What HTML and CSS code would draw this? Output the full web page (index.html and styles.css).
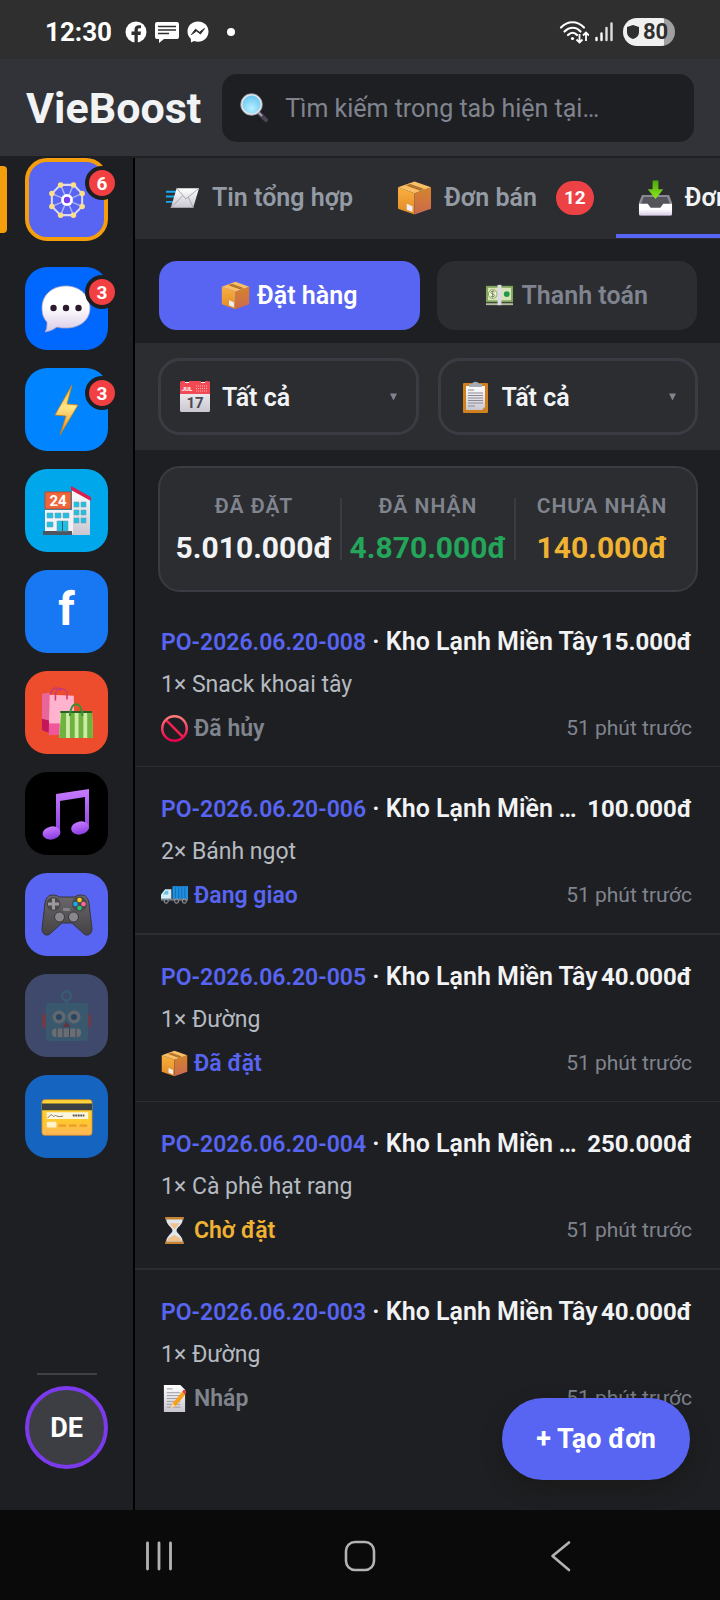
FILE: index.html
```html
<!DOCTYPE html>
<html lang="vi">
<head>
<meta charset="utf-8">
<meta name="viewport" content="width=device-width, initial-scale=1">
<title>VieBoost</title>
<link rel="stylesheet" href="styles.css">
</head>
<body>
<svg class="sprite" width="0" height="0" aria-hidden="true">
  <defs>
    <linearGradient id="g-white" x1="0" y1="0" x2="0" y2="1"><stop offset=".45" stop-color="#fff"/><stop offset="1" stop-color="#d8c9e6"/></linearGradient>
    <linearGradient id="g-paper" x1="0" y1="0" x2="0" y2="1"><stop offset="0" stop-color="#fff"/><stop offset="1" stop-color="#c9c6d0"/></linearGradient>
    <linearGradient id="g-bolt" x1="0" y1="0" x2="0" y2="1"><stop offset="0" stop-color="#f2b632"/><stop offset=".45" stop-color="#ffe58a"/><stop offset="1" stop-color="#e8830c"/></linearGradient>
    <linearGradient id="g-box" x1="0" y1="0" x2="0" y2="1"><stop offset="0" stop-color="#fbb040"/><stop offset="1" stop-color="#e08a25"/></linearGradient>
    <linearGradient id="g-box2" x1="0" y1="0" x2="0" y2="1"><stop offset="0" stop-color="#d9822a"/><stop offset="1" stop-color="#c96a50"/></linearGradient>
    <linearGradient id="g-pink" x1="0" y1="0" x2="0" y2="1"><stop offset=".7" stop-color="#ffb3cf"/><stop offset=".72" stop-color="#f0569a"/></linearGradient>
    <linearGradient id="g-note" x1="0" y1="0" x2="0" y2="1"><stop offset="0" stop-color="#c77bff"/><stop offset="1" stop-color="#8a3ce0"/></linearGradient>
    <linearGradient id="g-pad" x1="0" y1="0" x2="0" y2="1"><stop offset="0" stop-color="#6b686c"/><stop offset="1" stop-color="#454246"/></linearGradient>
    <linearGradient id="g-card" x1="0" y1="0" x2="0" y2="1"><stop offset="0" stop-color="#ffd43a"/><stop offset=".6" stop-color="#ffc82e"/><stop offset="1" stop-color="#ffb65c"/></linearGradient>
    <linearGradient id="g-arrow" x1="0" y1="0" x2="0" y2="1"><stop offset="0" stop-color="#4ea80c"/><stop offset="1" stop-color="#8be61e"/></linearGradient>
    <linearGradient id="g-ban" x1="0" y1="0" x2="0" y2="1"><stop offset="0" stop-color="#ff7b7b"/><stop offset="1" stop-color="#e8004c"/></linearGradient>
    <radialGradient id="g-lens" cx=".5" cy=".7" r=".6"><stop offset="0" stop-color="#b8f0ff"/><stop offset="1" stop-color="#6cc9f2"/></radialGradient>
  </defs>

  <symbol id="i-search" viewBox="0 0 28 30">
    <path d="M18 19l8 8" stroke="#4a4352" stroke-width="4" stroke-linecap="round"/>
    <path d="M18 19l4 4" stroke="#a89fb0" stroke-width="2"/>
    <circle cx="11.500" cy="11.500" r="10" fill="url(#g-lens)" stroke="#e4e6ea" stroke-width="2"/>
    <circle cx="11.500" cy="11.500" r="10.900" fill="none" stroke="#667" stroke-width=".6"/>
  </symbol>

  <symbol id="i-wheel" viewBox="0 0 48 48">
    <g stroke="#fff" stroke-opacity=".5" stroke-width="1.500"><path d="M17 7.500l14 33M31 7.500l-14 33M7.500 17l33 14M7.500 31l33-14"/></g>
    <path d="M17 7.500h14L40.500 17v14L31 40.500H17L7.500 31V17z" fill="none" stroke="#d9dafc" stroke-width="2.200"/>
    <g fill="#fde085"><circle cx="17" cy="7.500" r="3"/><circle cx="31" cy="7.500" r="3"/><circle cx="40.500" cy="17" r="3"/><circle cx="40.500" cy="31" r="3"/><circle cx="31" cy="40.500" r="3"/><circle cx="17" cy="40.500" r="3"/><circle cx="7.500" cy="31" r="3"/><circle cx="7.500" cy="17" r="3"/></g>
    <circle cx="24" cy="24" r="6.500" fill="#fff"/><circle cx="24" cy="24" r="3.500" fill="#7c3aed"/>
  </symbol>

  <symbol id="i-chat" viewBox="0 0 52 52">
    <path d="M25 3C11 3 1 12 1 25c0 7 2 11 5 14 0 4 0 7-2 10 6-1 9-3 12-5 3 1 6 1 9 1 14 0 24-8 24-20S39 3 25 3z" fill="url(#g-white)" stroke="#a9a2c4" stroke-width=".8"/>
    <g fill="#2a1a2c"><circle cx="12.500" cy="25" r="3.200"/><circle cx="25" cy="25" r="3.200"/><circle cx="37.500" cy="25" r="3.200"/></g>
  </symbol>
  <symbol id="i-bolt" viewBox="0 0 52 52">
    <path d="M31 1L14 31l11 1-6 19 18-30-11-1z" fill="url(#g-bolt)" stroke="#c98212" stroke-width=".8" stroke-linejoin="round"/>
  </symbol>
  <symbol id="i-bags" viewBox="0 0 54 54">
    <path d="M1 7l8-1v42l-8-3z" fill="#e8669a"/><path d="M1 33l8 2v13l-8-3z" fill="#c2185b"/>
    <path d="M9 8l25 1 1 40-27 1z" fill="url(#g-pink)"/>
    <path d="M15 14V8c0-8 11-8 12-1v6M10 8c1-9 9-8 11-4" fill="none" stroke="#c93a72" stroke-width="1.600"/>
    <path d="M20 25h33l1 28H19z" fill="#cdeaa6"/>
    <path d="M21 25h5v28h-7zM30 25h5v28h-5zM39 25h5v28h-5zM48 25h5l1 28h-6z" fill="#6db33d"/>
    <path d="M20 25h33v2H20z" fill="#2c6124"/><path d="M30 30c0-16 13-16 13 0" fill="none" stroke="#3a8f35" stroke-width="2"/>
  </symbol>
  <symbol id="i-music" viewBox="0 0 52 52">
    <path d="M15 6L48 1v40h-4V9L19 13v34h-4z" fill="url(#g-note)"/>
    <ellipse cx="10.500" cy="45" rx="9" ry="6.500" fill="url(#g-note)" transform="rotate(-12 10.500 45)"/><ellipse cx="39" cy="40" rx="9" ry="6.500" fill="url(#g-note)" transform="rotate(-12 39 40)"/>
  </symbol>
  <symbol id="i-gamepad" viewBox="0 0 52 52">
    <path d="M12 6c3 0 5 1 6 2h16c1-1 3-2 6-2 5 0 7 3 8 8l3 26c0 6-6 8-9 4L31 34H21L10 44c-3 4-9 2-9-4l3-26c1-5 3-8 8-8z" fill="url(#g-pad)" stroke="#37343a"/>
    <circle cx="12.500" cy="15" r="7" fill="#4b484c"/><path d="M11 9.500h3v4h4v3h-4v4h-3v-4H7v-3h4z" fill="#9c999e"/>
    <circle cx="38.500" cy="15" r="7.500" fill="#4b484c"/><circle cx="38.500" cy="11" r="2.300" fill="#ffcc16"/><circle cx="34.500" cy="15" r="2.300" fill="#18a9f0"/><circle cx="42.500" cy="15" r="2.300" fill="#ff6b92"/><circle cx="38.500" cy="19" r="2.300" fill="#1fc46c"/>
    <rect x="22" y="19" width="7" height="3" rx="1" fill="#858287"/>
    <circle cx="18.500" cy="28" r="5" fill="#8a878c" stroke="#3b383d"/><circle cx="32.500" cy="28" r="5" fill="#8a878c" stroke="#3b383d"/>
  </symbol>
  <symbol id="i-robot" viewBox="0 0 52 52">
    <circle cx="25.500" cy="6" r="4.500" fill="none" stroke="#63b6e6" stroke-width="2.500"/><path d="M25.500 10v5" stroke="#63b6e6" stroke-width="3"/>
    <path d="M1 26c0-2 2-2 4-2v14c-3 0-4-1-4-3zM50 26c0-2-2-2-4-2v14c3 0 4-1 4-3z" fill="#e8667f"/>
    <rect x="5" y="13" width="42" height="38" rx="3" fill="#62aede"/>
    <circle cx="18" cy="27" r="6.500" fill="#c6d2e0"/><circle cx="33" cy="27" r="6.500" fill="#c6d2e0"/><circle cx="18" cy="27" r="3" fill="#3b7fc5"/><circle cx="33" cy="27" r="3" fill="#3b7fc5"/>
    <path d="M25.500 32l4 5h-8z" fill="#d84a5f"/><rect x="11" y="38.500" width="29" height="8.500" rx="4" fill="#dde3ec"/><path d="M16 38v9M22 38v9M28.500 38v9M35 38v9" stroke="#5d7f9d" stroke-width="1"/>
  </symbol>
  <symbol id="i-card" viewBox="0 0 54 54">
    <rect x="1" y="9" width="52" height="37" rx="3" fill="url(#g-card)" stroke="#d98a18" stroke-width=".8"/>
    <path d="M1 13h52v7H1z" fill="#3a3f42"/><path d="M6 22h43v7H6z" fill="#fdf6df"/><path d="M7 28c5-7 5 0 7-2s2 2 9 0" fill="none" stroke="#555" stroke-width=".8"/><path d="M33 25.500h12" stroke="#555" stroke-width="2" stroke-dasharray="2 .6"/>
    <rect x="6" y="32" width="10" height="6" rx="1.500" fill="#fff3d0"/><path d="M18 36h31" stroke="#eda32a" stroke-width="3" stroke-dasharray="8 3"/>
  </symbol>

  <symbol id="i-mail" viewBox="0 0 36 36">
    <path d="M1 11.500h11M1 16.500h9M1 22h7" stroke="#18a9ee" stroke-width="2"/>
    <path d="M12 8h23l-6 20H6z" fill="url(#g-paper)"/><path d="M12 8l9.500 11L35 8M6 28l12-12M29 28l-5-11" fill="none" stroke="#a7a5ad" stroke-width="1"/>
  </symbol>
  <symbol id="i-box" viewBox="0 0 36 36">
    <path d="M1 7l17 6v22L1 29z" fill="url(#g-box)"/><path d="M18 13l17-6v22l-17 6z" fill="url(#g-box2)"/>
    <path d="M1 7l17-6 17 6-17 6z" fill="#f8bf66"/><path d="M8 5l17 6 4-1.500L12 3.400z" fill="#e0953c"/><path d="M11 5l14 5M13 4l14 5" stroke="#7d511f" stroke-width=".8"/>
    <path d="M25 11l4-1.500V15l-4 1z" fill="#c98333"/><path d="M10 24l6 2.500v6L10 30z" fill="#f0eef4"/>
  </symbol>
  <symbol id="i-inbox" viewBox="0 0 36 36">
    <path d="M4 15h28l3 8v13H1V23z" fill="#8a8892"/><path d="M6 17h24l3 8h-7l-3 4H13l-3-4H3z" fill="#56545b"/>
    <path d="M1 24h9l3 4h10l3-4h9v10q0 2-2 2H3q-2 0-2-2z" fill="url(#g-white)"/>
    <path d="M15 0h6v9h5l-8 10-8-10h5z" fill="url(#g-arrow)"/>
  </symbol>
  <symbol id="i-cash" viewBox="0 0 30 30">
    <rect x="1" y="5" width="28" height="17" fill="#7ea35a"/><rect x="3" y="7" width="24" height="13" fill="#d8e3b8"/><circle cx="8" cy="13.500" r="4.500" fill="#f3f0da" stroke="#7ea35a"/>
    <path d="M10 11.500c-1-1.500-4-1-4 .500s4 1.500 4 3-3 2-4 .500M8 10v7" fill="none" stroke="#6f8a50" stroke-width="1"/>
    <circle cx="22.500" cy="13.500" r="3" fill="#1b9a4c"/><path d="M1 23h28v2H1z" fill="#b9bda0"/><path d="M13 4h4v21h-4z" fill="#dcdae6"/>
  </symbol>
  <symbol id="i-clipboard" viewBox="0 0 30 32">
    <rect x="3" y="2" width="25" height="30" rx="1" fill="#d0801f"/><path d="M6 5h19v21l-3 3H6z" fill="url(#g-paper)"/>
    <path d="M8 9h6M8 12h15M8 14.500h15M8 17h15M8 19.500h15M8 22h15M8 25h7" stroke="#8b8998" stroke-width="1"/>
    <path d="M9 6V3h3c1-3 6-3 7 0h3v3z" fill="#a5abb5"/>
  </symbol>
  <symbol id="i-ban" viewBox="0 0 26 26"><path d="M4.500 4.500l17 17" stroke="#f0204f" stroke-width="2.500"/><circle cx="13" cy="13" r="11.800" fill="none" stroke="url(#g-ban)" stroke-width="2.400"/></symbol>
  <symbol id="i-truck" viewBox="0 0 26 26">
    <path d="M11 4h15v13H11z" fill="#1f8fe0"/><path d="M14 5v11M17 5v11M20 5v11M23 5v11" stroke="#1565ad" stroke-width=".8"/><path d="M4 7h6v10H0v-5z" fill="#d3edf6"/><path d="M4.500 8.500H7V12H2z" fill="#6bbfe3"/><path d="M0 16h26v2H0z" fill="#737a84"/>
    <g fill="#33363c" stroke="#a9adb4" stroke-width=".8"><circle cx="5" cy="18.500" r="2"/><circle cx="15" cy="18.500" r="2"/><circle cx="22.500" cy="18.500" r="2"/></g>
  </symbol>
  <symbol id="i-hourglass" viewBox="0 0 26 26">
    <path d="M5 2h16c0 6-6 8-6 11s6 5 6 11H5c0-6 6-8 6-11S5 8 5 2z" fill="#dfe6ee"/><path d="M8 6h10l-5 6zM6 23c1-4 5-4 7-6 2 2 6 2 7 6z" fill="#efc18c"/><path d="M4 0h18v2.500H4zM4 23.500h18V26H4z" fill="#c68335"/>
  </symbol>
  <symbol id="i-memo" viewBox="0 0 26 28">
    <path d="M2 0h17l5 5v23H2z" fill="url(#g-paper)"/><path d="M5 4h6M5 8h14M5 11h14M5 14h14M5 17h14M5 20h14M5 23h14" stroke="#9d9ba6" stroke-width="1"/>
    <path d="M9 24l2-5L21 7l3 3-10 12z" fill="#f9a01b"/><path d="M21 7l1.500-2q3 0 2.500 3L24 10z" fill="#d8433b"/><path d="M9 24l2-5 3 3z" fill="#f6d9b0"/>
  </symbol>
</svg>

<div class="status-bar">
  <span class="clock">12:30</span>
  <svg class="status-icon" viewBox="0 0 22 22"><circle cx="11" cy="11" r="10.500" fill="#fff"/><path d="M9.500 22v-8H6.500v-3.500h3V8.500c0-3 2-4.200 4.300-4.200H16v3h-1.500c-1.200 0-1.700.6-1.700 1.700v1.500H16l-.5 3.500h-2.700v8z" fill="#2f2f2f"/></svg>
  <svg class="status-icon status-icon-wide" viewBox="0 0 24 22"><path d="M2 1h20q2 0 2 2v13q0 2-2 2H9l-5 4v-4H2q-2 0-2-2V3q0-2 2-2z" fill="#fff"/><path d="M3 5.500h18M3 9h18M3 12.500h11" stroke="#2f2f2f" stroke-width="1.600"/></svg>
  <svg class="status-icon" viewBox="0 0 22 22"><path d="M11 .5C5 .5.500 4.700.500 10.500c0 3 1.200 5.500 3.300 7.300L4 21.500l3-1.400c1.200.4 2.600.6 4 .6 6 0 10.500-4.400 10.500-10.200S17 .5 11 .5z" fill="#fff"/><path d="M4.500 13.500l4-5.300 4 3 5-3.700-4 5.500-4-3z" fill="#2f2f2f" stroke="#2f2f2f" stroke-linejoin="round"/></svg>
  <span class="status-dot"></span>
  <div class="status-right">
    <svg class="wifi" viewBox="0 0 30 24"><g fill="none" stroke="#fff" stroke-width="2.200" stroke-linecap="round"><path d="M2 7.500C8.500 .5 18.500 .5 25 7.500M5.500 11.500c5-5 11.500-5 16 0M9 15c3-3 6.500-3 9 0"/></g><circle cx="13.500" cy="18.500" r="1.600" fill="#fff"/><g fill="none" stroke="#fff" stroke-width="1.800"><path d="M20.500 14v8M17.500 19.500l3 3 3-3M27 21v-8M24 15.500l3-3 3 3"/></g></svg>
    <svg class="signal" viewBox="0 0 18 20"><g stroke-width="2.400" stroke-linecap="round"><path d="M1.500 16v2M6.500 11.500V18" stroke="#fff"/><path d="M11.500 6v12M16.500 1.500V18" stroke="#dedede"/></g></svg>
    <span class="battery"><svg class="shield" viewBox="0 0 14 16"><path d="M7 1l6 2v5c0 3.500-2.500 6-6 7-3.500-1-6-3.500-6-7V3z" fill="#2f2f2f"/></svg>80</span>
  </div>
</div>

<header class="header">
  <h1 class="brand">VieBoost</h1>
  <label class="search">
    <svg class="search-icon"><use href="#i-search"/></svg>
    <input class="search-input" type="text" placeholder="Tìm kiếm trong tab hiện tại…" aria-label="Tìm kiếm">
  </label>
</header>

<div class="shell">
  <nav class="sidebar" aria-label="Kênh">
    <button class="app app-wheel" aria-label="Tổng hợp"><svg class="wheel-icon"><use href="#i-wheel"/></svg><span class="count">6</span></button>
    <button class="app app-zalo" aria-label="Chat"><svg class="app-icon"><use href="#i-chat"/></svg><span class="count">3</span></button>
    <button class="app app-messenger" aria-label="Messenger"><svg class="app-icon"><use href="#i-bolt"/></svg><span class="count">3</span></button>
    <button class="app app-store" aria-label="Cửa hàng">
      <svg class="app-icon" viewBox="0 0 52 52">
        <path d="M31 3l18 12v35H31z" fill="url(#g-paper)"/><path d="M4 25h28v23H4z" fill="#f4f2f6"/>
        <path d="M30 1l20 11v4L30 5z" fill="#dc1f4e"/>
        <rect x="4" y="7" width="26" height="17" fill="#f0663c" stroke="#b74020" stroke-width=".8"/>
        <text x="17" y="21" class="glyph-sign" text-anchor="middle">24</text>
        <path d="M2 46h29v4H2z" fill="#4d5562"/>
        <g fill="#21bfe2" stroke="#6ba6b5" stroke-width=".6"><path d="M6 28h6v5H6zM14 28h6v5h-6zM22 28h6v5h-6zM6 37h6v5H6zM16 36h11v10H16zM33 17h5v5h-5zM40 17h5v5h-5zM33 25h5v5h-5zM40 25h5v5h-5zM33 33h5v5h-5zM40 33h5v5h-5z"/></g>
        <path d="M21.500 36v10" stroke="#28606f" stroke-width="1"/>
      </svg>
    </button>
    <button class="app app-facebook">f</button>
    <button class="app app-shopee" aria-label="Mua sắm"><svg class="app-icon"><use href="#i-bags"/></svg></button>
    <button class="app app-tiktok" aria-label="Âm nhạc"><svg class="app-icon"><use href="#i-music"/></svg></button>
    <button class="app app-discord" aria-label="Trò chơi"><svg class="app-icon"><use href="#i-gamepad"/></svg></button>
    <button class="app app-bot" aria-label="Robot"><svg class="app-icon"><use href="#i-robot"/></svg></button>
    <button class="app app-card" aria-label="Thẻ"><svg class="app-icon"><use href="#i-card"/></svg></button>
    <hr class="sidebar-rule">
    <button class="avatar">DE</button>
  </nav>

  <main class="content">
    <div class="tabs">
      <button class="tab"><svg class="tab-icon"><use href="#i-mail"/></svg>Tin tổng hợp</button>
      <button class="tab"><svg class="tab-icon"><use href="#i-box"/></svg>Đơn bán<span class="tab-count">12</span></button>
      <button class="tab tab-active"><svg class="tab-icon"><use href="#i-inbox"/></svg>Đơn</button>
    </div>

    <div class="segments">
      <button class="segment segment-active"><svg class="segment-icon"><use href="#i-box"/></svg>Đặt hàng</button>
      <button class="segment"><svg class="segment-icon"><use href="#i-cash"/></svg>Thanh toán</button>
    </div>

    <div class="filters">
      <label class="filter">
        <svg class="filter-icon" viewBox="0 0 30 32">
          <rect x="0" y="1" width="30" height="30" rx="1.500" fill="url(#g-paper)"/><path d="M0 2q0-2 2-2h3v2h4V0h12v2h4V0h3q2 0 2 2v11H0z" fill="#f24a55"/>
          <text x="7" y="10" class="glyph-month" text-anchor="middle">JUL</text><path d="M16 5h12M16 7.500h12M16 10h12" stroke="#ffb2b2" stroke-width="1" stroke-dasharray="1 1"/>
          <text x="15" y="27" class="glyph-day" text-anchor="middle">17</text>
        </svg>
        <select class="filter-select" aria-label="Thời gian"><option>Tất cả</option></select><svg class="caret" viewBox="0 0 8 8"><path d="M0 0h8L4 8z" fill="#80848e"/></svg>
      </label>
      <label class="filter"><svg class="filter-icon"><use href="#i-clipboard"/></svg><select class="filter-select" aria-label="Trạng thái"><option>Tất cả</option></select><svg class="caret" viewBox="0 0 8 8"><path d="M0 0h8L4 8z" fill="#80848e"/></svg></label>
    </div>

    <section class="summary">
      <div class="stat"><span class="stat-label">ĐÃ ĐẶT</span><span class="stat-value">5.010.000đ</span></div>
      <div class="stat"><span class="stat-label">ĐÃ NHẬN</span><span class="stat-value green">4.870.000đ</span></div>
      <div class="stat"><span class="stat-label">CHƯA NHẬN</span><span class="stat-value amber">140.000đ</span></div>
    </section>

    <ul class="orders">
      <li class="order">
        <div class="order-head"><div class="order-title"><span class="order-id">PO-2026.06.20-008</span> · Kho Lạnh Miền Tây</div><span class="order-price">15.000đ</span></div>
        <div class="order-items">1× Snack khoai tây</div>
        <div class="order-foot"><span class="order-status muted"><svg class="status-emoji"><use href="#i-ban"/></svg>Đã hủy</span><time class="order-time">51 phút trước</time></div>
      </li>
      <li class="order">
        <div class="order-head"><div class="order-title"><span class="order-id">PO-2026.06.20-006</span> · Kho Lạnh Miền Tây</div><span class="order-price">100.000đ</span></div>
        <div class="order-items">2× Bánh ngọt</div>
        <div class="order-foot"><span class="order-status blue"><svg class="status-emoji"><use href="#i-truck"/></svg>Đang giao</span><time class="order-time">51 phút trước</time></div>
      </li>
      <li class="order">
        <div class="order-head"><div class="order-title"><span class="order-id">PO-2026.06.20-005</span> · Kho Lạnh Miền Tây</div><span class="order-price">40.000đ</span></div>
        <div class="order-items">1× Đường</div>
        <div class="order-foot"><span class="order-status blue"><svg class="status-emoji"><use href="#i-box"/></svg>Đã đặt</span><time class="order-time">51 phút trước</time></div>
      </li>
      <li class="order">
        <div class="order-head"><div class="order-title"><span class="order-id">PO-2026.06.20-004</span> · Kho Lạnh Miền Tây</div><span class="order-price">250.000đ</span></div>
        <div class="order-items">1× Cà phê hạt rang</div>
        <div class="order-foot"><span class="order-status amber"><svg class="status-emoji"><use href="#i-hourglass"/></svg>Chờ đặt</span><time class="order-time">51 phút trước</time></div>
      </li>
      <li class="order">
        <div class="order-head"><div class="order-title"><span class="order-id">PO-2026.06.20-003</span> · Kho Lạnh Miền Tây</div><span class="order-price">40.000đ</span></div>
        <div class="order-items">1× Đường</div>
        <div class="order-foot"><span class="order-status muted"><svg class="status-emoji"><use href="#i-memo"/></svg>Nháp</span><time class="order-time">51 phút trước</time></div>
      </li>
    </ul>
    <button class="create">+ Tạo đơn</button>
  </main>
</div>

<nav class="system-nav" aria-label="Hệ thống">
  <button class="system-button" aria-label="Gần đây"><svg class="system-icon" viewBox="0 0 32 32"><path d="M4.500 3v26M16 3v26M27.500 3v26" stroke="#b3b3b3" stroke-width="2.800" stroke-linecap="round"/></svg></button>
  <button class="system-button" aria-label="Trang chủ"><svg class="system-icon" viewBox="0 0 32 32"><rect x="2" y="2" width="28" height="28" rx="9" fill="none" stroke="#b3b3b3" stroke-width="2.600"/></svg></button>
  <button class="system-button" aria-label="Quay lại"><svg class="system-icon" viewBox="0 0 32 32"><path d="M24 2.500L7.500 16 24 30" fill="none" stroke="#b3b3b3" stroke-width="2.600" stroke-linecap="round" stroke-linejoin="round"/></svg></button>
</nav>
</body>
</html>
```
FILE: styles.css
```css
* { box-sizing: border-box; }

body {
  margin: 0;
  min-height: 100vh;
  display: flex;
  flex-direction: column;
  overflow-x: hidden;
  background: #1e1f22;
  color: #f2f3f5;
  font-family: Roboto, "Noto Sans", sans-serif;
}

button, input, select { font: inherit; color: inherit; border: 0; margin: 0; padding: 0; background: none; }
svg { flex: none; display: block; }
.sprite { position: absolute; }

.glyph-sign { font-size: 15px; font-weight: 700; fill: #fff; }
.glyph-month { font-size: 6px; font-weight: 700; fill: #fff; }
.glyph-day { font-size: 15px; font-weight: 700; fill: #4a4a50; }

/* Status bar */
.status-bar {
  height: 59px;
  padding: 4px 45px 0;
  display: flex;
  align-items: center;
  gap: 8px;
  background: #2f2f2f;
  color: #fff;
}
.clock { margin-right: 5px; font-size: 26px; font-weight: 700; }
.status-icon { width: 22px; height: 22px; }
.status-icon-wide { width: 24px; }
.status-dot { width: 8px; height: 8px; margin-left: 10px; border-radius: 50%; background: #fff; }
.status-right { margin-left: auto; display: flex; align-items: center; gap: 6px; }
.wifi { width: 30px; height: 24px; }
.signal { width: 18px; height: 20px; }
.battery {
  width: 52px;
  height: 28px;
  margin-left: 4px;
  padding-left: 3px;
  display: flex;
  align-items: center;
  gap: 3px;
  border-radius: 14px;
  background: linear-gradient(90deg, #f0f0f0 79%, #a0a0a0 79%);
  color: #2f2f2f;
  font-size: 22px;
  font-weight: 700;
}
.shield { width: 14px; height: 16px; }

/* Header */
.header {
  padding: 15px 26px 14px;
  display: flex;
  align-items: center;
  gap: 21px;
  background: #313338;
  border-bottom: 2px solid #1e1f22;
}
.brand { margin: 0; font-size: 43px; line-height: 48px; font-weight: 700; }
.search {
  flex: 1;
  min-width: 0;
  height: 68px;
  padding: 0 18px;
  display: flex;
  align-items: center;
  gap: 17px;
  border-radius: 15px;
  background: #1e1f22;
}
.search-icon { width: 28px; height: 30px; }
.search-input { flex: 1; min-width: 0; font-size: 25px; outline: 0; }
.search-input::placeholder { color: #80848e; opacity: 1; }

.shell { flex: 1; display: flex; }

/* Sidebar */
.sidebar {
  width: 135px;
  flex: none;
  padding: 0 25px 41px;
  display: flex;
  flex-direction: column;
  gap: 18px;
  border-right: 2px solid #000;
}
.app {
  position: relative;
  width: 83px;
  height: 83px;
  display: flex;
  align-items: center;
  justify-content: center;
  border-radius: 22px;
}
.app-icon { width: 52px; height: 52px; }
.wheel-icon { width: 44px; height: 44px; }
.app-wheel { margin-bottom: 8px; background: #5865f2; border: 4px solid #f59e0b; }
.app-wheel::before {
  content: "";
  position: absolute;
  left: -29px;
  top: 4px;
  width: 7px;
  height: 67px;
  border-radius: 0 4px 4px 0;
  background: #f59e0b;
}
.app-zalo { background: #0068ff; }
.app-messenger { background: #0084ff; }
.app-store { background: #00a8eb; }
.app-facebook { background: #1877f2; color: #fff; font-size: 46px; line-height: 78px; align-items: flex-start; font-weight: 700; }
.app-shopee { background: #ee4d2d; }
.app-tiktok { background: #000; }
.app-discord { background: #5865f2; }
.app-bot { background: #7289da; opacity: .4; }
.app-card { background: #1565c0; }
.count {
  position: absolute;
  right: -11px;
  top: 8px;
  width: 34px;
  height: 34px;
  border: 4px solid #1e1f22;
  border-radius: 50%;
  background: #f23f42;
  color: #fff;
  font-size: 19px;
  line-height: 27px;
  font-weight: 700;
  text-align: center;
}
.app-wheel .count { right: -15px; top: 4px; }
.sidebar-rule { width: 60px; height: 2px; margin: auto auto -7px; border: 0; background: #3f4147; }
.avatar {
  width: 83px;
  height: 83px;
  border: 4px solid #7c3aed;
  border-radius: 50%;
  background: #3c3e44;
  color: #fff;
  font-size: 27px;
  font-weight: 700;
}

/* Content */
.content { position: relative; flex: 1; min-width: 0; }
.tabs {
  height: 81px;
  padding-left: 8px;
  display: flex;
  overflow: hidden;
  background: #2b2d31;
  color: #949ba4;
}
.tab {
  flex: none;
  height: 80px;
  padding: 3px 22px 0;
  display: flex;
  align-items: center;
  gap: 12px;
  border-bottom: 4px solid transparent;
  font-size: 25px;
  font-weight: 600;
}
.tab-icon { width: 35px; height: 36px; }
.tab-active { border-color: #5865f2; color: #f2f3f5; }
.tab-count {
  margin-left: 7px;
  height: 34px;
  padding: 0 8px;
  border-radius: 17px;
  background: #ed4245;
  color: #fff;
  font-size: 19px;
  line-height: 34px;
  font-weight: 700;
}

.segments { padding: 22px 23px 13px 24px; display: grid; grid-template-columns: 1fr 1fr; gap: 17px; }
.segment {
  height: 69px;
  display: flex;
  align-items: center;
  justify-content: center;
  gap: 7px;
  border-radius: 18px;
  background: #2b2d31;
  color: #80848e;
  font-size: 25px;
  font-weight: 600;
}
.segment-active { background: #5865f2; color: #fff; }
.segment-icon { width: 29px; height: 29px; }

.filters { padding: 15px 22px 15px 23px; display: grid; grid-template-columns: 1fr 1fr; gap: 19px; background: #2b2d31; }
.filter {
  height: 77px;
  padding: 0 19px;
  display: flex;
  align-items: center;
  gap: 12px;
  border: 3px solid #3b3c43;
  border-radius: 22px;
}
.filter-icon { width: 30px; height: 32px; }
.filter-select { flex: 1; min-width: 0; height: 34px; padding-top: 2px; appearance: none; font-size: 25px; font-weight: 600; outline: 0; }
.caret { width: 7px; height: 8px; }

.summary {
  height: 126px;
  margin: 16px 22px 8px 23px;
  padding: 0 8px;
  display: grid;
  grid-template-columns: 174px 174px 1fr;
  align-items: start;
  border: 2px solid #3b3c43;
  border-radius: 22px;
  background: #2b2d31;
}
.stat {
  height: 62px;
  margin-top: 30px;
  display: flex;
  flex-direction: column;
  align-items: center;
  justify-content: space-between;
  border-right: 2px solid #3b3c43;
}
.stat:last-child { border-right: 0; }
.stat-label { font-size: 21px; line-height: 16px; font-weight: 600; letter-spacing: 1px; color: #80848e; }
.stat-value { font-size: 30px; line-height: 24px; font-weight: 700; }
.green { color: #23a55a; }
.amber { color: #f0b232; }
.blue { color: #5865f2; }
.muted { color: #80848e; }

.orders { margin: 0; padding: 0; list-style: none; }
.order { padding: 21px 28px 16px 26px; border-bottom: 1px solid #2b2d31; }
.order:nth-child(even) { border-bottom-width: 2px; }
.order:last-child { border-bottom: 0; }
.order-head { height: 42px; display: flex; align-items: center; font-size: 25px; line-height: 41px; font-weight: 600; }
.order-title { flex: 1; min-width: 0; overflow: hidden; white-space: nowrap; text-overflow: ellipsis; }
.order-id { font-size: 23px; color: #5865f2; }
.order-price { font-size: 24px; font-weight: 700; }
.order-items { font-size: 23px; line-height: 43px; color: #b5bac1; }
.order-foot { height: 44px; display: flex; align-items: center; justify-content: space-between; }
.order-status { display: flex; align-items: center; gap: 6px; font-size: 23px; font-weight: 600; }
.status-emoji { width: 27px; height: 27px; }
.order-time { font-size: 21px; color: #80848e; }

.create {
  position: absolute;
  right: 30px;
  bottom: 30px;
  height: 82px;
  padding: 0 34px;
  border-radius: 41px;
  background: #5865f2;
  color: #fff;
  font-size: 27px;
  font-weight: 700;
  box-shadow: 0 8px 18px #1a1a1a;
}

/* System navigation */
.system-nav {
  height: 90px;
  padding: 2px 58px 0;
  display: flex;
  background: #0a0a0a;
}
.system-button { flex: 1; display: flex; align-items: center; justify-content: center; }
.system-icon { width: 32px; height: 32px; }
```
